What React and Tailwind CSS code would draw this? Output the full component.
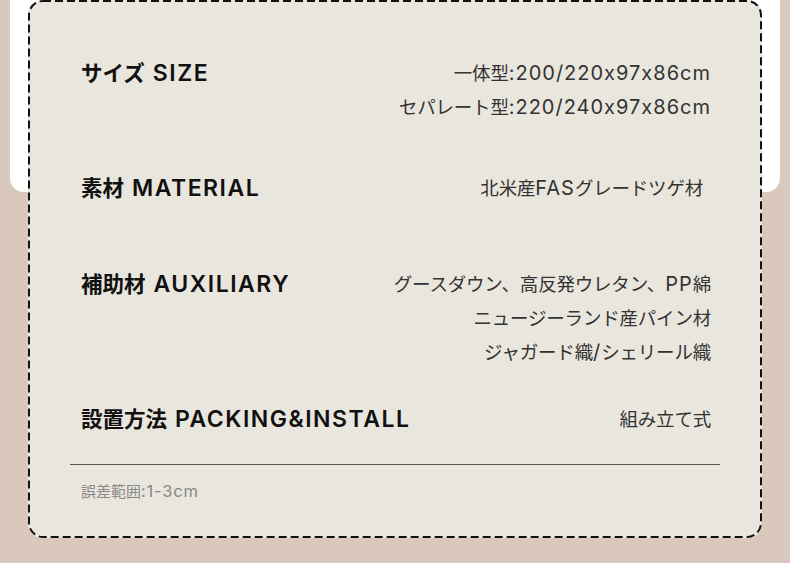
const rows = [
  { label: ["サイズ", "SIZE"], values: ["一体型:200/220x97x86cm", "セパレート型:220/240x97x86cm"], mt: "mt-0" },
  { label: ["素材", "MATERIAL"], values: ["北米産FASグレードツゲ材"], mt: "mt-[47px]", pr: "pr-[8px]" },
  { label: ["補助材", "AUXILIARY"], values: ["グースダウン、高反発ウレタン、PP綿", "ニュージーランド産パイン材", "ジャガード織/シェリール織"], mt: "mt-[62px]" },
  { label: ["設置方法", "PACKING&INSTALL"], values: ["組み立て式"], mt: "mt-[33px]" },
]

const font = { fontFamily: "Inter, 'Noto Sans CJK JP', sans-serif", fontFeatureSettings: "'calt' 0" }

// split a string into runs of latin / japanese so latin can be sized wider
const runs = (s) => s.match(/[A-Za-z0-9/:\-&.]+|[^A-Za-z0-9/:\-&.]+/g) || []
const isLatin = (t) => /^[A-Za-z0-9/:\-&.]+$/.test(t)

function Value({ text, latin, jp, h = "h-[34px] leading-[34px]" }) {
  return (
    <div className={`${h} whitespace-nowrap`}>
      {runs(text).map((t, i) => (
        <span key={i} className={isLatin(t) ? latin : jp}>{t}</span>
      ))}
    </div>
  )
}

export default function App() {
  return (
    <div className="relative w-[790px] h-[563px] overflow-hidden bg-[#d9c8bb]" style={font}>
      {/* white panel underneath */}
      <div className="absolute left-[10px] top-[-40px] w-[770px] h-[232px] rounded-[14px] bg-white" />

      <div className="relative ml-[28px] w-[734px] h-[538px] rounded-[14px] bg-[#e9e6dd] flex flex-col">
        <svg className="absolute inset-0 pointer-events-none" width="734" height="538">
          <rect x="1" y="1" width="732" height="536" rx="14" fill="none" stroke="#111" strokeWidth="2" strokeDasharray="8 4" />
        </svg>

        <div className="relative pt-[56px] pl-[53px] pr-[51px]">
          {rows.map((r, i) => (
            <div key={i} className={`flex justify-between ${r.mt}`}>
              <div className="h-[34px] leading-[34px] font-semibold text-[#111] whitespace-nowrap">
                <span className="text-[21.5px]">{r.label[0]}</span>
                <span className="ml-[8px] text-[23px] tracking-[1.5px]">{r.label[1]}</span>
              </div>
              <div className={`flex flex-col items-end text-[#333] ${r.pr || ""}`}>
                {r.values.map((v, j) => (
                  <Value key={j} text={v} latin="text-[20px] tracking-[1px]" jp="text-[18.5px] tracking-[-0.2px]" />
                ))}
              </div>
            </div>
          ))}
        </div>
        <div className="mx-[42px] mt-[28px] h-px bg-[#555]" />
        <div className="relative pl-[53px] mt-[16px] text-[#888]">
          <Value text="誤差範囲:1-3cm" latin="text-[16.5px] tracking-[0.8px]" jp="text-[15px]" h="h-[20px] leading-[20px]" />
        </div>
      </div>
    </div>
  )
}
